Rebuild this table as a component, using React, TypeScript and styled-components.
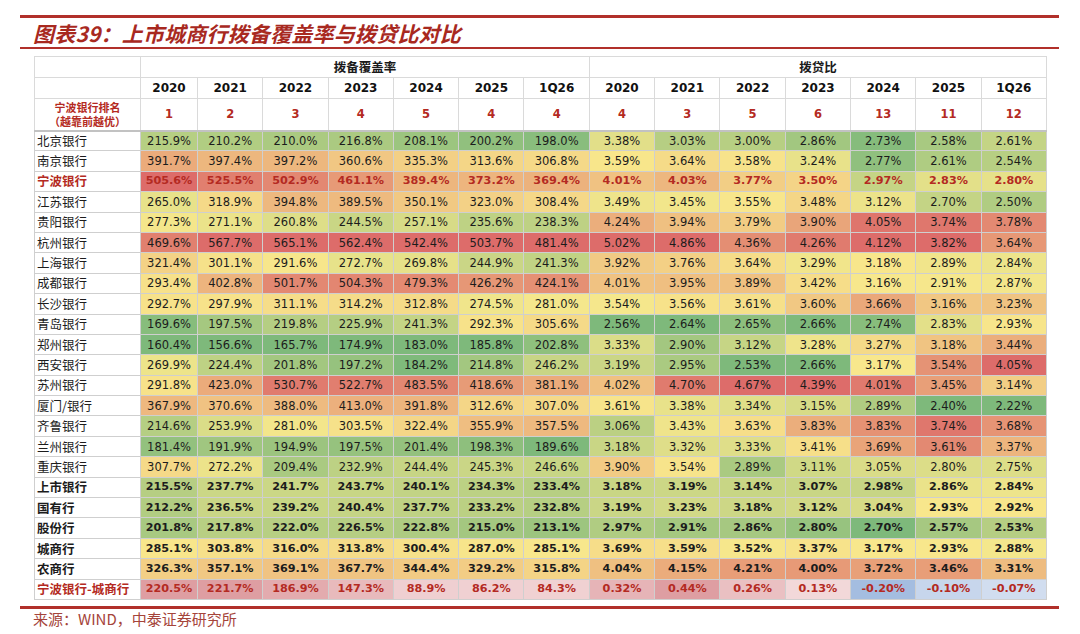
import { FC } from 'react'
import styled, { createGlobalStyle } from 'styled-components'

type Kind = 'bank' | 'focus' | 'total' | 'spread'
type RGB = [number, number, number]

interface BankRow {
  name: string
  coverage: number[]
  ldr: number[]
  kind: Kind
}

const YEARS = ['2020', '2021', '2022', '2023', '2024', '2025', '1Q26']
const COVERAGE_RANK = [1, 2, 3, 4, 5, 4, 4]
const LDR_RANK = [4, 3, 5, 6, 13, 11, 12]

const ROWS: BankRow[] = [
  { name: '北京银行', kind: 'bank', coverage: [215.9, 210.2, 210.0, 216.8, 208.1, 200.2, 198.0], ldr: [3.38, 3.03, 3.0, 2.86, 2.73, 2.58, 2.61] },
  { name: '南京银行', kind: 'bank', coverage: [391.7, 397.4, 397.2, 360.6, 335.3, 313.6, 306.8], ldr: [3.59, 3.64, 3.58, 3.24, 2.77, 2.61, 2.54] },
  { name: '宁波银行', kind: 'focus', coverage: [505.6, 525.5, 502.9, 461.1, 389.4, 373.2, 369.4], ldr: [4.01, 4.03, 3.77, 3.5, 2.97, 2.83, 2.8] },
  { name: '江苏银行', kind: 'bank', coverage: [265.0, 318.9, 394.8, 389.5, 350.1, 323.0, 308.4], ldr: [3.49, 3.45, 3.55, 3.48, 3.12, 2.7, 2.5] },
  { name: '贵阳银行', kind: 'bank', coverage: [277.3, 271.1, 260.8, 244.5, 257.1, 235.6, 238.3], ldr: [4.24, 3.94, 3.79, 3.9, 4.05, 3.74, 3.78] },
  { name: '杭州银行', kind: 'bank', coverage: [469.6, 567.7, 565.1, 562.4, 542.4, 503.7, 481.4], ldr: [5.02, 4.86, 4.36, 4.26, 4.12, 3.82, 3.64] },
  { name: '上海银行', kind: 'bank', coverage: [321.4, 301.1, 291.6, 272.7, 269.8, 244.9, 241.3], ldr: [3.92, 3.76, 3.64, 3.29, 3.18, 2.89, 2.84] },
  { name: '成都银行', kind: 'bank', coverage: [293.4, 402.8, 501.7, 504.3, 479.3, 426.2, 424.1], ldr: [4.01, 3.95, 3.89, 3.42, 3.16, 2.91, 2.87] },
  { name: '长沙银行', kind: 'bank', coverage: [292.7, 297.9, 311.1, 314.2, 312.8, 274.5, 281.0], ldr: [3.54, 3.56, 3.61, 3.6, 3.66, 3.16, 3.23] },
  { name: '青岛银行', kind: 'bank', coverage: [169.6, 197.5, 219.8, 225.9, 241.3, 292.3, 305.6], ldr: [2.56, 2.64, 2.65, 2.66, 2.74, 2.83, 2.93] },
  { name: '郑州银行', kind: 'bank', coverage: [160.4, 156.6, 165.7, 174.9, 183.0, 185.8, 202.8], ldr: [3.33, 2.9, 3.12, 3.28, 3.27, 3.18, 3.44] },
  { name: '西安银行', kind: 'bank', coverage: [269.9, 224.4, 201.8, 197.2, 184.2, 214.8, 246.2], ldr: [3.19, 2.95, 2.53, 2.66, 3.17, 3.54, 4.05] },
  { name: '苏州银行', kind: 'bank', coverage: [291.8, 423.0, 530.7, 522.7, 483.5, 418.6, 381.1], ldr: [4.02, 4.7, 4.67, 4.39, 4.01, 3.45, 3.14] },
  { name: '厦门/银行', kind: 'bank', coverage: [367.9, 370.6, 388.0, 413.0, 391.8, 312.6, 307.0], ldr: [3.61, 3.38, 3.34, 3.15, 2.89, 2.4, 2.22] },
  { name: '齐鲁银行', kind: 'bank', coverage: [214.6, 253.9, 281.0, 303.5, 322.4, 355.9, 357.5], ldr: [3.06, 3.43, 3.63, 3.83, 3.83, 3.74, 3.68] },
  { name: '兰州银行', kind: 'bank', coverage: [181.4, 191.9, 194.9, 197.5, 201.4, 198.3, 189.6], ldr: [3.18, 3.32, 3.33, 3.41, 3.69, 3.61, 3.37] },
  { name: '重庆银行', kind: 'bank', coverage: [307.7, 272.2, 209.4, 232.9, 244.4, 245.3, 246.6], ldr: [3.9, 3.54, 2.89, 3.11, 3.05, 2.8, 2.75] },
  { name: '上市银行', kind: 'total', coverage: [215.5, 237.7, 241.7, 243.7, 240.1, 234.3, 233.4], ldr: [3.18, 3.19, 3.14, 3.07, 2.98, 2.86, 2.84] },
  { name: '国有行', kind: 'total', coverage: [212.2, 236.5, 239.2, 240.4, 237.7, 233.2, 232.8], ldr: [3.19, 3.23, 3.18, 3.12, 3.04, 2.93, 2.92] },
  { name: '股份行', kind: 'total', coverage: [201.8, 217.8, 222.0, 226.5, 222.8, 215.0, 213.1], ldr: [2.97, 2.91, 2.86, 2.8, 2.7, 2.57, 2.53] },
  { name: '城商行', kind: 'total', coverage: [285.1, 303.8, 316.0, 313.8, 300.4, 287.0, 285.1], ldr: [3.69, 3.59, 3.52, 3.37, 3.17, 2.93, 2.88] },
  { name: '农商行', kind: 'total', coverage: [326.3, 357.1, 369.1, 367.7, 344.4, 329.2, 315.8], ldr: [4.04, 4.15, 4.21, 4.0, 3.72, 3.46, 3.31] },
  { name: '宁波银行-城商行', kind: 'spread', coverage: [220.5, 221.7, 186.9, 147.3, 88.9, 86.2, 84.3], ldr: [0.32, 0.44, 0.26, 0.13, -0.2, -0.1, -0.07] },
]

// three-colour scale, green (low) -> yellow (median) -> red (high)
const GREEN: RGB = [126, 185, 123]
const YELLOW: RGB = [248, 232, 140]
const RED: RGB = [221, 108, 106]
const PINK_LOW: RGB = [251, 240, 240]
const PINK_HIGH: RGB = [222, 158, 162]
const BLUE_LOW: RGB = [233, 238, 247]
const BLUE_HIGH: RGB = [164, 189, 224]

const mix = (a: RGB, b: RGB, t: number): string => {
  const k = Math.max(0, Math.min(1, t))
  return `rgb(${a.map((v, i) => Math.round(v + (b[i] - v) * k)).join(',')})`
}

const heatScale = (values: number[]) => {
  const sorted = [...values].sort((a, b) => a - b)
  const min = sorted[0]
  const max = sorted[sorted.length - 1]
  const mid = sorted.length % 2
    ? sorted[(sorted.length - 1) / 2]
    : (sorted[sorted.length / 2 - 1] + sorted[sorted.length / 2]) / 2
  return (v: number) =>
    v <= mid ? mix(GREEN, YELLOW, (v - min) / (mid - min)) : mix(YELLOW, RED, (v - mid) / (max - mid))
}

const spreadScale = (values: number[]) => {
  const maxPos = Math.max(...values.filter(v => v > 0), 0.0001)
  const maxNeg = Math.max(...values.filter(v => v < 0).map(v => -v), 0.0001)
  return (v: number) => (v >= 0 ? mix(PINK_LOW, PINK_HIGH, v / maxPos) : mix(BLUE_LOW, BLUE_HIGH, -v / maxNeg))
}

const GlobalStyle = createGlobalStyle`
  html, body {
    margin: 0;
    padding: 0;
    background: #ffffff;
  }
  body {
    font-family: 'Noto Sans CJK SC', 'DejaVu Sans', sans-serif;
  }
`

const ValueRow: FC<{ row: BankRow; covColors: string[]; ldrColors: string[] }> = ({ row, covColors, ldrColors }) => (
  <DataRow>
    <LabelCell $kind={row.kind}>{row.name}</LabelCell>
    {row.coverage.map((v, i) => (
      <ValueCell key={`c${i}`} $kind={row.kind} style={{ backgroundColor: covColors[i] }}>
        {v.toFixed(1)}%
      </ValueCell>
    ))}
    {row.ldr.map((v, i) => (
      <ValueCell key={`l${i}`} $kind={row.kind} style={{ backgroundColor: ldrColors[i] }}>
        {v.toFixed(2)}%
      </ValueCell>
    ))}
  </DataRow>
)

export default function App() {
  const scaled = ROWS.filter(r => r.kind !== 'spread')
  const covScales = YEARS.map((_, i) => heatScale(scaled.map(r => r.coverage[i])))
  const ldrScales = YEARS.map((_, i) => heatScale(scaled.map(r => r.ldr[i])))
  const spread = ROWS.find(r => r.kind === 'spread')!
  const spreadCov = spreadScale(spread.coverage)
  const spreadLdr = spreadScale(spread.ldr)

  return (
    <>
      <GlobalStyle />
      <Page>
        <Rule $thick={3} />
        <Title>图表39：上市城商行拨备覆盖率与拨贷比对比</Title>
        <Rule $thick={2} />
        <TableWrap>
          <Table>
            <colgroup>
              <Col $w={106} />
              <Col $w={57} />
              {Array.from({ length: 13 }).map((_, i) => (
                <Col key={i} $w={65.3} />
              ))}
            </colgroup>
            <thead>
              <GroupRow>
                <BlankHead />
                <GroupHead colSpan={7}>拨备覆盖率</GroupHead>
                <GroupHead colSpan={7}>拨贷比</GroupHead>
              </GroupRow>
              <YearRow>
                <BlankHead />
                {[...YEARS, ...YEARS].map((y, i) => (
                  <YearHead key={i}>{y}</YearHead>
                ))}
              </YearRow>
              <RankRow>
                <RankLabel>
                  <RankLine>宁波银行排名</RankLine>
                  <RankLine>（越靠前越优）</RankLine>
                </RankLabel>
                {[...COVERAGE_RANK, ...LDR_RANK].map((r, i) => (
                  <RankCell key={i}>{r}</RankCell>
                ))}
              </RankRow>
            </thead>
            <tbody>
              {ROWS.map(row => {
                const covColors = row.coverage.map((v, i) => (row.kind === 'spread' ? spreadCov(v) : covScales[i](v)))
                const ldrColors = row.ldr.map((v, i) => (row.kind === 'spread' ? spreadLdr(v) : ldrScales[i](v)))
                return <ValueRow key={row.name} row={row} covColors={covColors} ldrColors={ldrColors} />
              })}
            </tbody>
          </Table>
        </TableWrap>
        <BottomRule $thick={3} />
        <Source>来源：WIND，中泰证券研究所</Source>
      </Page>
    </>
  )
}

const RED_TEXT = '#b42a22'
const GRID = '#cfcfcf'

const Page = styled.div`
  width: 1080px;
  height: 634px;
  box-sizing: border-box;
  padding: 15px 21px 0 20px;
  overflow: hidden;
`

const Rule = styled.div<{ $thick: number }>`
  height: ${p => p.$thick}px;
  background: #b1302a;
`

const BottomRule = styled(Rule)`
  margin-top: 6px;
`

const Title = styled.h1`
  margin: 0;
  height: 29px;
  line-height: 30px;
  padding-left: 13px;
  font-family: 'Noto Sans CJK SC', sans-serif;
  font-size: 21px;
  font-weight: 700;
  font-style: italic;
  letter-spacing: 0.2px;
  color: #a8291f;
`

const TableWrap = styled.div`
  padding: 7px 0 0 14px;
`

const Table = styled.table`
  table-layout: fixed;
  border-collapse: collapse;
  width: 1012px;
  border: 1px solid ${GRID};
`

const Col = styled.col<{ $w: number }>`
  width: ${p => p.$w}px;
`

const HeadCell = styled.th`
  box-sizing: border-box;
  padding: 0;
  border: 1px solid #dadada;
  background: #ffffff;
  text-align: center;
  vertical-align: middle;
  line-height: 14px;
`

const GroupRow = styled.tr`
  height: 21px;
`

const YearRow = styled.tr`
  height: 21px;
`

const RankRow = styled.tr`
  height: 32px;
  border-bottom: 2px solid #c2c2c2;
`

const DataRow = styled.tr`
  height: 20.4px;
`

const BlankHead = styled(HeadCell)``

const GroupHead = styled(HeadCell)`
  font-family: 'Noto Sans CJK SC', sans-serif;
  font-size: 12.5px;
  font-weight: 700;
  color: #1a1a1a;
`

const YearHead = styled(HeadCell)`
  font-family: 'DejaVu Sans', sans-serif;
  font-size: 12px;
  font-weight: 700;
  color: #111111;
`

const RankLabel = styled(HeadCell)`
  font-family: 'Noto Sans CJK SC', sans-serif;
  font-size: 11px;
  font-weight: 700;
  color: ${RED_TEXT};
`

const RankLine = styled.div`
  height: 14px;
  line-height: 14px;
  white-space: nowrap;
`

const RankCell = styled(HeadCell)`
  font-family: 'DejaVu Sans', sans-serif;
  font-size: 11.5px;
  font-weight: 700;
  color: ${RED_TEXT};
`

const BodyCell = styled.td<{ $kind: Kind }>`
  box-sizing: border-box;
  padding: 0;
  border: 1px solid ${GRID};
  white-space: nowrap;
  line-height: 14px;
  font-weight: ${p => (p.$kind === 'bank' ? 400 : 700)};
  color: ${p => (p.$kind === 'focus' || p.$kind === 'spread' ? RED_TEXT : '#1c1c1c')};
`

const LabelCell = styled(BodyCell)`
  padding-left: 2px;
  background: #ffffff;
  font-family: 'Noto Sans CJK SC', sans-serif;
  font-size: 12.5px;
`

const ValueCell = styled(BodyCell)`
  text-align: center;
  font-family: 'DejaVu Sans', sans-serif;
  font-size: ${p => (p.$kind === 'bank' ? 11.5 : 11.2)}px;
`

const Source = styled.div`
  padding: 1px 0 0 13px;
  font-family: 'Noto Sans CJK SC', sans-serif;
  font-size: 15px;
  line-height: 18px;
  color: #a5443a;
`
